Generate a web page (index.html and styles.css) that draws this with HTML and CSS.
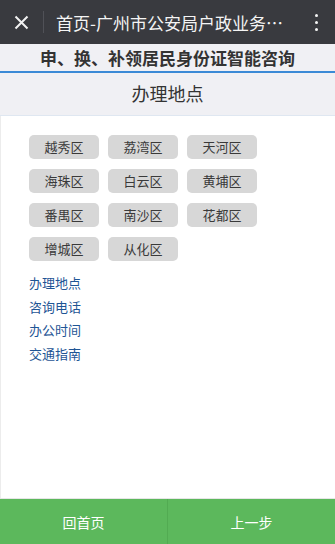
FILE: index.html
```html
<!DOCTYPE html>
<html lang="zh-CN">
<head>
    <meta charset="UTF-8">
    <meta name="viewport" content="width=device-width, initial-scale=1.0">
    <title>办理地点</title>
    <link rel="stylesheet" href="styles.css">
</head>
<body>
    <div class="topbar">
        <div class="close">
            <svg width="15" height="15" viewBox="0 0 15 15">
                <path d="M1.5 1.5 L13.5 13.5 M13.5 1.5 L1.5 13.5" stroke="#f2f2f2" stroke-width="2" fill="none"/>
            </svg>
        </div>
        <div class="topbar-title">首页-广州市公安局户政业务…</div>
        <div class="more">
            <span></span><span></span><span></span>
        </div>
    </div>

    <div class="subtitle">申、换、补领居民身份证智能咨询</div>
    <div class="section-title">办理地点</div>

    <div class="content">
        <div class="district-grid">
            <a class="district">越秀区</a>
            <a class="district">荔湾区</a>
            <a class="district">天河区</a>
            <a class="district">海珠区</a>
            <a class="district">白云区</a>
            <a class="district">黄埔区</a>
            <a class="district">番禺区</a>
            <a class="district">南沙区</a>
            <a class="district">花都区</a>
            <a class="district">增城区</a>
            <a class="district">从化区</a>
        </div>

        <ul class="links">
            <li><a>办理地点</a></li>
            <li><a>咨询电话</a></li>
            <li><a>办公时间</a></li>
            <li><a>交通指南</a></li>
        </ul>
    </div>

    <div class="footer">
        <a class="footer-btn">回首页</a>
        <a class="footer-btn">上一步</a>
    </div>
</body>
</html>
```

FILE: styles.css
```css
* {
    margin: 0;
    padding: 0;
    box-sizing: border-box;
    font-family: "Noto Sans CJK SC", "Noto Sans", sans-serif;
}

body {
    background: #fff;
    height: 544px;
    display: flex;
    flex-direction: column;
    overflow: hidden;
}

.topbar {
    height: 44px;
    background: #393a3f;
    display: flex;
    align-items: center;
    flex-shrink: 0;
}

.close {
    width: 44px;
    height: 22px;
    display: flex;
    align-items: center;
    justify-content: center;
    border-right: 1px solid #505157;
}

.topbar-title {
    flex: 1;
    padding-left: 12px;
    color: #f4f4f4;
    font-size: 17px;
    white-space: nowrap;
    overflow: hidden;
}

.more {
    width: 38px;
    display: flex;
    flex-direction: column;
    align-items: center;
    gap: 4px;
}

.more span {
    width: 3px;
    height: 3px;
    border-radius: 50%;
    background: #f4f4f4;
}

.subtitle {
    height: 29px;
    line-height: 27px;
    background: #f0f0f4;
    text-align: center;
    font-size: 17px;
    font-weight: bold;
    color: #333;
    border-bottom: 2px solid #3b8ad6;
    flex-shrink: 0;
}

.section-title {
    height: 43px;
    line-height: 41px;
    background: #f0f0f4;
    text-align: center;
    font-size: 18px;
    color: #333;
    border-bottom: 1px solid #dfe7f1;
    flex-shrink: 0;
}

.content {
    flex: 1;
    padding: 19px 0 0 28px;
    border-left: 1px solid #ececec;
}

.district-grid {
    display: grid;
    grid-template-columns: repeat(3, 70px);
    column-gap: 9px;
    row-gap: 10px;
}

.district {
    height: 24px;
    line-height: 24px;
    background: #d7d7d7;
    border-radius: 5px;
    text-align: center;
    font-size: 13px;
    color: #3a3a3a;
}

.links {
    list-style: none;
    margin-top: 10px;
}

.links li {
    line-height: 23.7px;
    font-size: 13px;
}

.links a {
    color: #1f5595;
}

.footer {
    height: 46px;
    display: flex;
    background: #5cb85c;
    border-top: 1px solid #e6e6e6;
    flex-shrink: 0;
}

.footer-btn {
    flex: 1;
    display: flex;
    align-items: center;
    justify-content: center;
    color: #fff;
    font-size: 14px;
}

.footer-btn + .footer-btn {
    border-left: 1px solid #52ab52;
}
```
